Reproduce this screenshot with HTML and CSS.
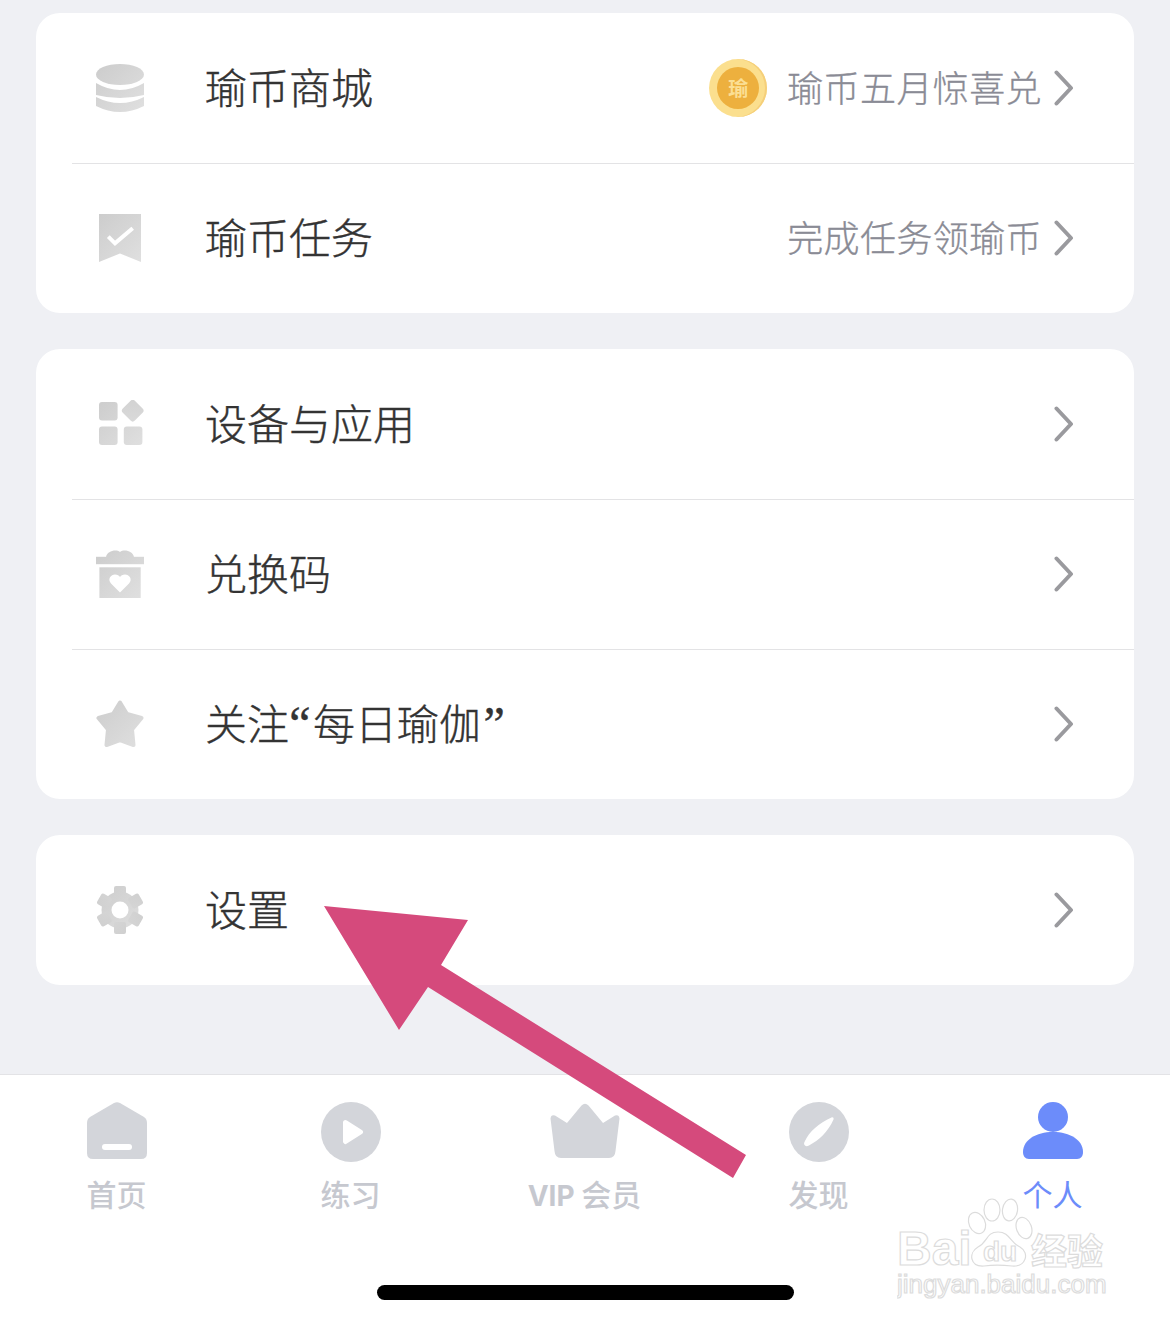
FILE: index.html
```
<!DOCTYPE html>
<html lang="zh-CN">
<head>
<meta charset="utf-8">
<title>个人</title>
<link rel="stylesheet" href="styles.css">
</head>
<body>
<svg class="defs" width="0" height="0" aria-hidden="true">
  <defs>
    <linearGradient id="g" gradientUnits="userSpaceOnUse" x1="0" y1="0" x2="48" y2="48">
      <stop offset="0" stop-color="#cccccc"/>
      <stop offset="1" stop-color="#e0e0e0"/>
    </linearGradient>
  </defs>
</svg>
<main class="page">
  <section class="card">
    <div class="row">
      <svg class="ico" viewBox="0 0 48 48"><ellipse cx="24" cy="10.5" rx="24" ry="10.5" class="gf"/><path class="gf" d="M0 19Q24 33 48 19V31Q24 37 0 31Z"/><path class="gf" d="M0 33Q24 45 48 33V42Q24 54 0 42Z"/></svg>
      <span class="label">瑜币商城</span>
      <span class="extra">
        <span class="coin"><span class="coin-in">瑜</span></span>
        <span class="hint">瑜币五月惊喜兑</span>
      </span>
      <svg class="chev" viewBox="0 0 20 36"><path d="M2.5 2.5L17 18L2.5 33.5"/></svg>
    </div>
    <div class="row">
      <svg class="ico" viewBox="0 0 48 48"><path class="gf" d="M3 0H45V48L24 39.5L3 48Z"/><path class="wl" d="M12.3 22.7L19 29.3L36.7 14.3"/></svg>
      <span class="label">瑜币任务</span>
      <span class="extra"><span class="hint">完成任务领瑜币</span></span>
      <svg class="chev" viewBox="0 0 20 36"><path d="M2.5 2.5L17 18L2.5 33.5"/></svg>
    </div>
  </section>

  <section class="card">
    <div class="row">
      <svg class="ico" viewBox="0 0 48 48"><rect class="gf" x="3" y="2" width="18.6" height="18.6" rx="3"/><rect class="gf" x="3" y="26.4" width="18.6" height="18.6" rx="3"/><rect class="gf" x="27.8" y="26.4" width="18.6" height="18.6" rx="3"/><rect class="gf" x="28.2" y="2.2" width="17" height="17" rx="3" transform="rotate(45 36.7 10.7)"/></svg>
      <span class="label">设备与应用</span>
      <span class="extra"></span>
      <svg class="chev" viewBox="0 0 20 36"><path d="M2.5 2.5L17 18L2.5 33.5"/></svg>
    </div>
    <div class="row">
      <svg class="ico" viewBox="0 0 48 48"><path class="gf" d="M10 7C11 1 20 -1 24 2C28 -1 37 1 38 7Z"/><rect class="gf" y="6.8" width="48" height="7.4"/><rect class="gf" x="3.4" y="17.3" width="41.3" height="30.7"/><path fill="#fff" d="M24 42.5L15 33.5C11 29 15 24.5 19 24.5C21.500 24.500 23 25.500 24 27C25 25.500 26.500 24.500 29 24.500C33 24.500 37 29 33 33.500Z"/></svg>
      <span class="label">兑换码</span>
      <span class="extra"></span>
      <svg class="chev" viewBox="0 0 20 36"><path d="M2.5 2.5L17 18L2.5 33.5"/></svg>
    </div>
    <div class="row">
      <svg class="ico" viewBox="0 0 48 48"><path class="gf gs" d="M24 2.500L31 14L45.500 18L36 29.500L37.500 45L24 40L10.500 45L12 29.500L2.500 18L17 14Z"/></svg>
      <span class="label">关注<span class="q q-open">“</span>每日瑜伽<span class="q q-close">”</span></span>
      <span class="extra"></span>
      <svg class="chev" viewBox="0 0 20 36"><path d="M2.5 2.5L17 18L2.5 33.5"/></svg>
    </div>
  </section>

  <section class="card">
    <div class="row">
      <svg class="ico" viewBox="0 0 48 48">
        <circle class="gf" cx="24" cy="24" r="18.500"/>
        <rect class="gf" x="18" y="0" width="12" height="12" rx="2"/>
        <rect class="gf" x="18" y="0" width="12" height="12" rx="2" transform="rotate(60 24 24)"/>
        <rect class="gf" x="18" y="0" width="12" height="12" rx="2" transform="rotate(120 24 24)"/>
        <rect class="gf" x="18" y="0" width="12" height="12" rx="2" transform="rotate(180 24 24)"/>
        <rect class="gf" x="18" y="0" width="12" height="12" rx="2" transform="rotate(240 24 24)"/>
        <rect class="gf" x="18" y="0" width="12" height="12" rx="2" transform="rotate(300 24 24)"/>
        <circle cx="24" cy="24" r="8.500" fill="#fff"/>
      </svg>
      <span class="label">设置</span>
      <span class="extra"></span>
      <svg class="chev" viewBox="0 0 20 36"><path d="M2.5 2.5L17 18L2.5 33.5"/></svg>
    </div>
  </section>

  <nav class="tabbar">
    <div class="tabs">
      <div class="tab">
        <svg class="tab-ico" viewBox="0 0 60 60"><path class="tf" d="M27 1Q30 -0.500 33 1L57 15Q60 17 60 21V51Q60 57 54 57H6Q0 57 0 51V21Q0 17 3 15Z"/><rect x="15" y="42" width="30" height="6" rx="3" fill="#fff"/></svg>
        <span class="tab-label">首页</span>
      </div>
      <div class="tab">
        <svg class="tab-ico" viewBox="0 0 60 60"><circle class="tf" cx="30" cy="30" r="30"/><path fill="#fff" stroke="#fff" stroke-width="5" stroke-linejoin="round" d="M24.500 20.500L39.500 30L24.500 39.500Z"/></svg>
        <span class="tab-label">练习</span>
      </div>
      <div class="tab">
        <svg class="tab-ico tab-ico-wide" viewBox="0 0 70 60"><path class="tf" d="M31.500 3.500Q35 0 38.500 3.500L53 21L65 13.500Q69 12 69.500 16.500L65.500 49Q65 56 59 56H11Q5 56 4.500 49L0.500 16.500Q1 12 5 13.500L17 21Z"/></svg>
        <span class="tab-label"><span class="vip">VIP</span> 会员</span>
      </div>
      <div class="tab">
        <svg class="tab-ico" viewBox="0 0 60 60"><circle class="tf" cx="30" cy="30" r="30"/><path fill="#fff" d="M16 43.500C14.500 42 15 40.500 16 39C20 30 30 21 42.500 15.500C44 15 45 16 44.500 17.500C39 30 30 38 20 43.500C18 44.500 17 44.500 16 43.500Z"/></svg>
        <span class="tab-label">发现</span>
      </div>
      <div class="tab tab-on">
        <svg class="tab-ico" viewBox="0 0 60 60"><circle class="af" cx="30" cy="15" r="15"/><path class="af" d="M0 50C0 38 13 30 30 30C47 30 60 38 60 50C60 54 58 57 54 57H6C2 57 0 54 0 50Z"/></svg>
        <span class="tab-label">个人</span>
      </div>
    </div>
    <div class="home-bar"></div>
  </nav>
</main>

<svg class="arrow" viewBox="0 0 1170 1324" aria-hidden="true"><polygon points="324,906 468,920 441,965 746,1155 733,1178 428,987 399,1030"/></svg>

<svg class="mark" viewBox="0 0 220 110" aria-hidden="true">
  <g class="mark-shape">
    <ellipse cx="80" cy="27" rx="8" ry="11" transform="rotate(-25 80 27)"/>
    <ellipse cx="95" cy="14" rx="8" ry="11"/>
    <ellipse cx="113" cy="14" rx="7.500" ry="11" transform="rotate(8 113 14)"/>
    <ellipse cx="127" cy="32" rx="7.500" ry="11" transform="rotate(-20 127 32)"/>
    <path d="M101 36C113 36 113 47 123 51C133 57 129 71 115 70C105 69 95 69 87 70C73 71 71 57 81 51C91 46 89 36 101 36Z"/>
  </g>
  <text class="mark-big" x="0" y="69">Bai</text>
  <text class="mark-du" x="86" y="65">du</text>
  <text class="mark-cn" x="134" y="69">经验</text>
  <text class="mark-url" x="0" y="97">jingyan.baidu.com</text>
</svg>
</body>
</html>
```
FILE: styles.css
```
* { box-sizing: border-box; }
html, body { margin: 0; padding: 0; }
body {
  position: relative;
  width: 1170px;
  height: 1324px;
  overflow: hidden;
  background: #eff0f4;
  font-family: "Noto Sans CJK SC", "Liberation Sans", sans-serif;
  color: #333333;
}
.defs { position: absolute; }
.page { display: flex; flex-direction: column; gap: 36px; padding-top: 13px; height: 1324px; }
.card {
  margin: 0 36px;
  background: #fff;
  border-radius: 24px;
  overflow: hidden;
}
.row {
  display: flex;
  align-items: center;
  height: 150px;
  margin-left: 36px;
  padding-left: 24px;
  padding-right: 60px;
  box-shadow: 0 1px 0 #e3e3e5;
}
.row:last-child { box-shadow: none; }
.ico { width: 48px; height: 48px; flex: none; margin-right: 61px; }
.gf { fill: url(#g); }
.gs { stroke: url(#g); stroke-width: 4; stroke-linejoin: round; }
.wl { fill: none; stroke: #fff; stroke-width: 4; }
.label {
  font-size: 42px;
  line-height: 50px;
  font-weight: 300;
  -webkit-text-stroke: 0.4px #333333;
  margin-bottom: 5px;
  white-space: nowrap;
}
.q { font-family: "Liberation Serif", serif; display: inline-block; width: 22px; text-align: center; font-size: 48px; line-height: 40px; }
.q-open { margin-right: 2px; }
.q-close { margin-left: 2px; }
.extra { flex: 1; display: flex; justify-content: flex-end; align-items: center; margin-right: 12px; }
.hint {
  font-size: 36px;
  letter-spacing: 0.4px;
  line-height: 44px;
  font-weight: 300;
  -webkit-text-stroke: 0.3px #8a8b95;
  margin-bottom: 5px;
  color: #8a8b95;
  white-space: nowrap;
}
.coin {
  width: 58px;
  height: 58px;
  border-radius: 50%;
  background: #fbdf8e;
  box-shadow: inset -2px 0 0 #f5cf7a;
  display: flex;
  align-items: center;
  justify-content: center;
  margin-right: 20px;
}
.coin-in {
  width: 42px;
  height: 42px;
  border-radius: 50%;
  background: #edb03e;
  color: #fbdf94;
  font-size: 20px;
  font-weight: 700;
  line-height: 42px;
  text-align: center;
}
.chev { width: 20px; height: 36px; flex: none; }
.chev path { fill: none; stroke: #9a9a9e; stroke-width: 4; stroke-linecap: round; stroke-linejoin: round; }

.tabbar {
  margin-top: 53px;
  flex: 1;
  display: flex;
  flex-direction: column;
  background: #fff;
  border-top: 1px solid #e3e3e6;
}
.tabs { display: flex; padding-top: 27px; }
.tab { flex: 1; display: flex; flex-direction: column; align-items: center; }
.tab-ico { width: 60px; height: 60px; }
.tab-ico-wide { width: 70px; }
.tf { fill: #d3d5da; }
.af { fill: #6c8cfa; }
.tab-label { margin: 11px 1px 0 0; font-size: 30px; line-height: 40px; font-weight: 500; color: #c6c8cf; }
.vip { font-weight: 700; font-family: "Inter", sans-serif; font-size: 28px; }
.tab-on .tab-label { color: #6c8cfa; font-weight: 400; }
.home-bar {
  width: 417px;
  height: 15px;
  margin: auto auto 24px;
  background: #000;
  border-radius: 8px;
}
.arrow { position: absolute; left: 0; top: 0; width: 1170px; height: 1324px; pointer-events: none; }
.arrow polygon { fill: #d54a7c; }
.mark { position: absolute; left: 897px; top: 1196px; width: 220px; height: 110px; pointer-events: none; }
.mark text, .mark-shape { fill: #fff; stroke: #dcdcdc; stroke-width: 1.200; }
.mark-big { font: 700 48px "Liberation Sans", sans-serif; }
.mark-du { font: 700 28px "Liberation Sans", sans-serif; }
.mark-cn { font: 700 36px "Noto Sans CJK SC", sans-serif; }
.mark-url { font: 400 26px "Liberation Sans", sans-serif; }
```
